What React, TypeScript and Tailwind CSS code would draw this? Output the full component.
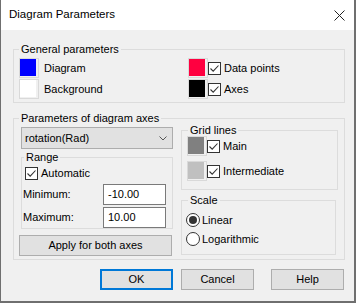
import React from "react";

function Swatch({ fill }: { fill: string }) {
  return (
    <span className="block h-[20px] w-[20px] shrink-0 border border-[#d9d9d9]">
      <span className={`block h-[17px] w-[16px] ${fill}`} />
    </span>
  );
}

function Check() {
  return (
    <span className="flex h-[13px] w-[13px] shrink-0 items-center justify-center border border-[#333] bg-white">
      <svg width="11" height="11" viewBox="0 0 11 11">
        <path d="M1.5 5.5 L4.2 8.2 L9.5 2.5" fill="none" stroke="#333" strokeWidth="1.1" />
      </svg>
    </span>
  );
}

function Radio({ checked }: { checked?: boolean }) {
  return (
    <span className="flex h-[14px] w-[14px] shrink-0 items-center justify-center rounded-full border border-[#333] bg-white">
      {checked && <span className="block h-[8px] w-[8px] rounded-full bg-[#333]" />}
    </span>
  );
}

export default function App() {
  return (
    <div className="h-[303px] w-[356px] overflow-hidden border-b-2 border-l border-r-2 border-[#6f6f6f] bg-[#f0f0f0] font-['Liberation_Sans',Arial,sans-serif] text-[11px] text-black">
      {/* title bar */}
      <div className="flex h-[30px] items-center justify-between bg-white pl-[8px] pr-[9px]">
        <span className="text-[11.5px]">Diagram Parameters</span>
        <svg width="11" height="11" viewBox="0 0 11 11">
          <path d="M0.5 0.5 L10.5 10.5 M10.5 0.5 L0.5 10.5" stroke="#222" strokeWidth="1" />
        </svg>
      </div>

      <fieldset className="ml-[12px] mt-[13px] w-[332px] border border-[#dcdcdc]">
        <legend className="ml-[5px] px-[2px] leading-[12px]">General parameters</legend>
        <div className="flex pb-[3px] pl-[5px] pt-[3px]">
          <div className="flex w-[169px] flex-col gap-[1px]">
            <div className="flex items-center gap-[5px]">
              <Swatch fill="bg-[#0000ff]" />
              <span>Diagram</span>
            </div>
            <div className="flex items-center gap-[5px]">
              <Swatch fill="bg-white" />
              <span>Background</span>
            </div>
          </div>
          <div className="flex flex-col gap-[1px]">
            <div className="flex items-center">
              <Swatch fill="bg-[#ff0040]" />
              <Check />
              <span className="ml-[3px]">Data points</span>
            </div>
            <div className="flex items-center">
              <Swatch fill="bg-black" />
              <Check />
              <span className="ml-[3px]">Axes</span>
            </div>
          </div>
        </div>
      </fieldset>

      <fieldset className="ml-[12px] mt-[9px] w-[332px] border border-[#dcdcdc]">
        <legend className="ml-[5px] px-[2px] leading-[12px]">Parameters of diagram axes</legend>
        <div className="flex items-start pb-[3px] pl-[7px]">
          <div className="mt-[3px] flex w-[152px] flex-col">
            <div className="flex h-[22px] items-center justify-between border border-[#adadad] bg-[#e1e1e1] pl-[3px] pr-[5px]">
              <span>rotation(Rad)</span>
              <svg width="8" height="5" viewBox="0 0 8 5">
                <path d="M0.5 0.5 L4 4 L7.5 0.5" fill="none" stroke="#555" strokeWidth="1" />
              </svg>
            </div>

            <fieldset className="mt-[2px] w-[152px] border border-[#dcdcdc]">
              <legend className="ml-[2px] px-[2px] leading-[12px]">Range</legend>
              <div className="flex flex-col pl-[3px] pt-[3px]">
                <div className="flex h-[14px] items-center gap-[3px]">
                  <Check />
                  <span>Automatic</span>
                </div>
              </div>
              <div className="mt-[4px] flex items-center">
                <span className="w-[81px] pl-[1px]">Minimum:</span>
                <span className="flex h-[21px] w-[63px] items-center border border-[#7a7a7a] bg-white px-[4px]">-10.00</span>
              </div>
              <div className="mt-[2px] flex items-center">
                <span className="w-[81px] pl-[1px]">Maximum:</span>
                <span className="flex h-[21px] w-[63px] items-center border border-[#7a7a7a] bg-white px-[4px]">10.00</span>
              </div>
            </fieldset>

            <button className="-ml-[2px] mt-[6px] h-[21px] w-[153px] border border-[#adadad] bg-[#e1e1e1]">
              Apply for both axes
            </button>
          </div>

          <div className="ml-[8px] flex flex-col">
            <fieldset className="w-[157px] border border-[#dcdcdc]">
              <legend className="ml-[6px] px-[2px] leading-[12px]">Grid lines</legend>
              <div className="flex flex-col gap-[5px] pb-[8px] pl-[5px]">
                <div className="flex items-center">
                  <Swatch fill="bg-[#808080]" />
                  <Check />
                  <span className="ml-[3px]">Main</span>
                </div>
                <div className="flex items-center">
                  <Swatch fill="bg-[#c0c0c0]" />
                  <Check />
                  <span className="ml-[3px]">Intermediate</span>
                </div>
              </div>
            </fieldset>

            <fieldset className="mt-[4px] w-[155px] border border-[#dcdcdc]">
              <legend className="ml-[6px] px-[2px] leading-[12px]">Scale</legend>
              <div className="flex flex-col gap-[3px] pb-[7px] pl-[4px] pt-[6px]">
                <div className="flex h-[16px] items-center gap-[2px]">
                  <Radio checked />
                  <span>Linear</span>
                </div>
                <div className="flex h-[16px] items-center gap-[2px]">
                  <Radio />
                  <span>Logarithmic</span>
                </div>
              </div>
            </fieldset>
          </div>
        </div>
      </fieldset>

      <div className="mt-[9px] flex pl-[99px]">
        <button className="h-[21px] w-[73px] border-2 border-[#0078d7] bg-[#e1e1e1]">OK</button>
        <button className="ml-[8px] h-[21px] w-[73px] border border-[#adadad] bg-[#e1e1e1]">Cancel</button>
        <button className="ml-[17px] h-[21px] w-[73px] border border-[#adadad] bg-[#e1e1e1]">Help</button>
      </div>
    </div>
  );
}
